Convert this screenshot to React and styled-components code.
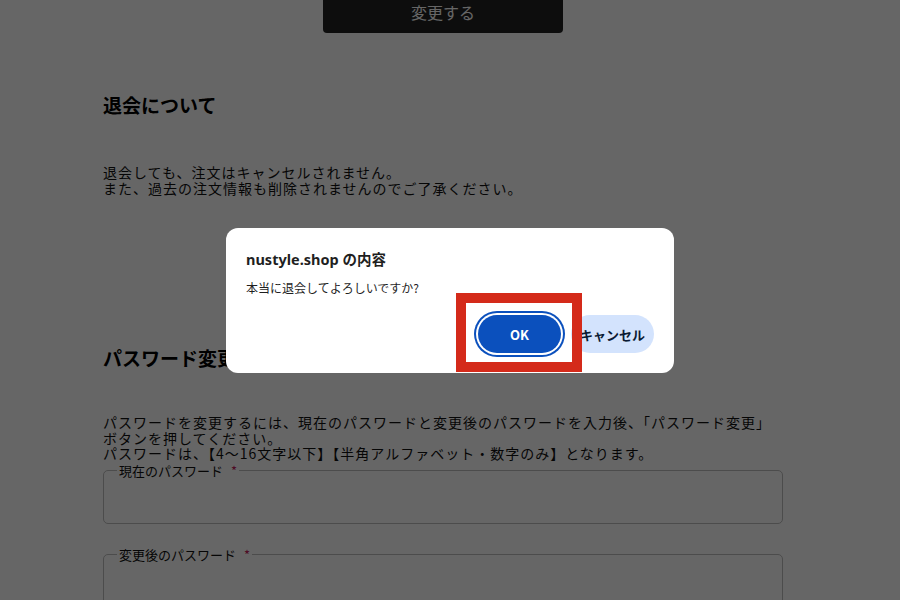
import React from "react";
import styled, { createGlobalStyle } from "styled-components";

const GlobalStyle = createGlobalStyle`
  html, body {
    margin: 0;
    padding: 0;
    background: #fff;
    font-family: "Noto Sans CJK JP", "Noto Sans", sans-serif;
    color: #111;
  }
  body {
    height: 600px;
    overflow: hidden;
  }
`;

const Page = styled.div`
  width: 680px;
  margin-left: 103px;
  display: flex;
  flex-direction: column;
`;

const SubmitButton = styled.button`
  align-self: center;
  width: 240px;
  height: 46px;
  margin-top: -13px;
  border: none;
  border-radius: 4px;
  background: #222;
  color: #fff;
  font-family: inherit;
  font-size: 16px;
  padding-top: 4px;
`;

const Heading = styled.h2`
  margin: ${(p) => p.$top}px 0 0;
  font-size: 19px;
  font-weight: 700;
  line-height: 26px;
  color: #000;
`;

const Text = styled.p`
  margin: ${(p) => p.$top}px 0 0;
  font-size: 14px;
  line-height: 15.5px;
  color: #111;
  letter-spacing: 1px;
`;

const Field = styled.fieldset`
  margin: ${(p) => p.$top}px 0 0;
  padding: 0 12px;
  height: 60px;
  box-sizing: border-box;
  border: 1px solid #bdbdbd;
  border-radius: 5px;
  min-width: 0;

  legend {
    padding: 0 2px;
    margin-left: 1px;
    font-size: 13px;
    line-height: 14px;
    color: #111;
  }

  span {
    color: #c2185b;
    margin-left: 8px;
  }
`;

const Overlay = styled.div`
  position: fixed;
  inset: 0;
  background: rgba(0, 0, 0, 0.6);
`;

const Dialog = styled.div`
  position: fixed;
  left: 226px;
  top: 228px;
  width: 448px;
  height: 145px;
  box-sizing: border-box;
  background: #fff;
  border-radius: 12px;
  padding: 20px 20px 0 20px;
  display: flex;
  flex-direction: column;
`;

const DialogTitle = styled.div`
  font-family: "Noto Sans", "Noto Sans CJK JP", sans-serif;
  font-size: 14.5px;
  font-weight: 700;
  color: #1f1f1f;
  line-height: 22px;
`;

const DialogMessage = styled.div`
  margin-top: 9px;
  font-size: 12px;
  line-height: 18px;
  color: #1f1f1f;
`;

const Actions = styled.div`
  display: flex;
  justify-content: flex-end;
  gap: 10px;
  margin-top: 18px;
`;

const ActionButton = styled.button`
  width: 83px;
  height: 38px;
  border: none;
  border-radius: 19px;
  font-family: "Noto Sans CJK JP", "Noto Sans", sans-serif;
  font-size: 13px;
  font-weight: 700;
  background: ${(p) => (p.$primary ? "#0b50bd" : "#d3e3fd")};
  color: ${(p) => (p.$primary ? "#fff" : "#0a1a33")};
  box-shadow: ${(p) =>
    p.$primary ? "0 0 0 2px #fff, 0 0 0 4px #0b50bd" : "none"};
`;

const Highlight = styled.div`
  position: fixed;
  left: 456px;
  top: 293px;
  width: 126px;
  height: 79px;
  box-sizing: border-box;
  border: 10px solid #d42a1a;
  pointer-events: none;
`;

export default function App() {
  return (
    <>
      <GlobalStyle />
      <Page>
        <SubmitButton>変更する</SubmitButton>
        <Heading $top={59}>退会について</Heading>
        <Text $top={47}>
          退会しても、注文はキャンセルされません。
          <br />
          また、過去の注文情報も削除されませんのでご了承ください。
        </Text>
        <Heading $top={149}>パスワード変更</Heading>
        <Text $top={44}>
          パスワードを変更するには、現在のパスワードと変更後のパスワードを入力後、「パスワード変更」
          <br />
          ボタンを押してください。
          <br />
          パスワードは、【4～16文字以下】【半角アルファベット・数字のみ】となります。
        </Text>
        <Field $top={2}>
          <legend>
            現在のパスワード<span>*</span>
          </legend>
        </Field>
        <Field $top={24}>
          <legend>
            変更後のパスワード<span>*</span>
          </legend>
        </Field>
      </Page>
      <Overlay />
      <Dialog>
        <DialogTitle>nustyle.shop の内容</DialogTitle>
        <DialogMessage>本当に退会してよろしいですか?</DialogMessage>
        <Actions>
          <ActionButton $primary>OK</ActionButton>
          <ActionButton>キャンセル</ActionButton>
        </Actions>
      </Dialog>
      <Highlight />
    </>
  );
}
